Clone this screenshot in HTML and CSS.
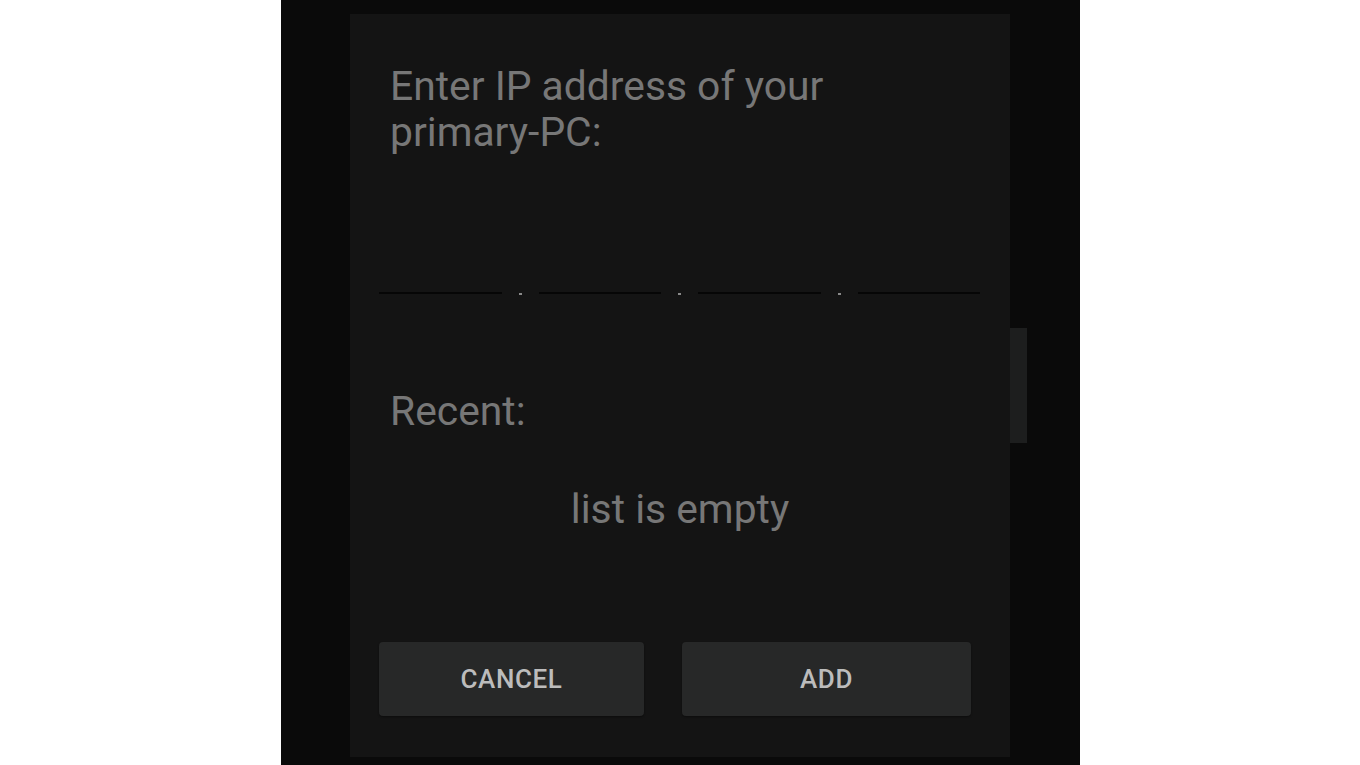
FILE: index.html
```html
<!DOCTYPE html>
<html lang="en">
<head>
<meta charset="utf-8">
<title>Enter IP address</title>
<link rel="stylesheet" href="styles.css">
</head>
<body>
<div class="phone">
  <div class="dialog">
    <div class="title">Enter IP address of your<br>primary-PC:</div>
    <div class="ip">
      <span class="seg"></span><span class="dot"></span>
      <span class="seg"></span><span class="dot"></span>
      <span class="seg"></span><span class="dot"></span>
      <span class="seg"></span>
    </div>
    <div class="recent">Recent:</div>
    <div class="empty">list is empty</div>
    <div class="buttons">
      <div class="btn btn-cancel">CANCEL</div>
      <div class="btn btn-add">ADD</div>
    </div>
  </div>
  <div class="thumb"></div>
</div>
</body>
</html>
```
FILE: styles.css
```css
html, body {
  margin: 0;
  padding: 0;
  background: #ffffff;
}
body {
  display: flex;
  justify-content: center;
  font-family: Roboto, "Liberation Sans", sans-serif;
}
.phone {
  position: relative;
  width: 799px;
  height: 765px;
  margin-left: 1px;
  background: #0a0a0a;
  padding: 14px 0 0 69px;
  box-sizing: border-box;
}
.dialog {
  width: 660px;
  height: 743px;
  background: #141414;
  box-sizing: border-box;
  padding-top: 49px;
  display: flex;
  flex-direction: column;
}
.title {
  margin-left: 40px;
  font-size: 40.8px;
  line-height: 46px;
  color: #777777;
}
.ip {
  display: flex;
  align-items: center;
  margin: 137px 30px 0 29px;
  height: 2px;
}
.seg {
  flex: 1;
  height: 2px;
  background: #060606;
}
.dot {
  width: 3px;
  height: 2px;
  margin: 2px 17px 0;
  background: #8a8a8a;
}
.recent {
  margin: 94px 0 0 40px;
  font-size: 40.8px;
  line-height: 46px;
  color: #777777;
}
.empty {
  margin-top: 52px;
  text-align: center;
  font-size: 40.8px;
  line-height: 46px;
  color: #777777;
}
.buttons {
  display: flex;
  margin: 110px 0 0 29px;
  gap: 38px;
}
.btn {
  height: 74px;
  border-radius: 4px;
  background: #272828;
  color: #bcbcbc;
  font-size: 26px;
  font-weight: 500;
  letter-spacing: 0.6px;
  display: flex;
  align-items: center;
  justify-content: center;
  box-shadow: 0 1px 2px rgba(0, 0, 0, 0.4);
}
.btn-cancel {
  width: 265px;
}
.btn-add {
  width: 289px;
}
.thumb {
  position: absolute;
  left: 729px;
  top: 328px;
  width: 17px;
  height: 115px;
  background: #1d1e1e;
}
```
